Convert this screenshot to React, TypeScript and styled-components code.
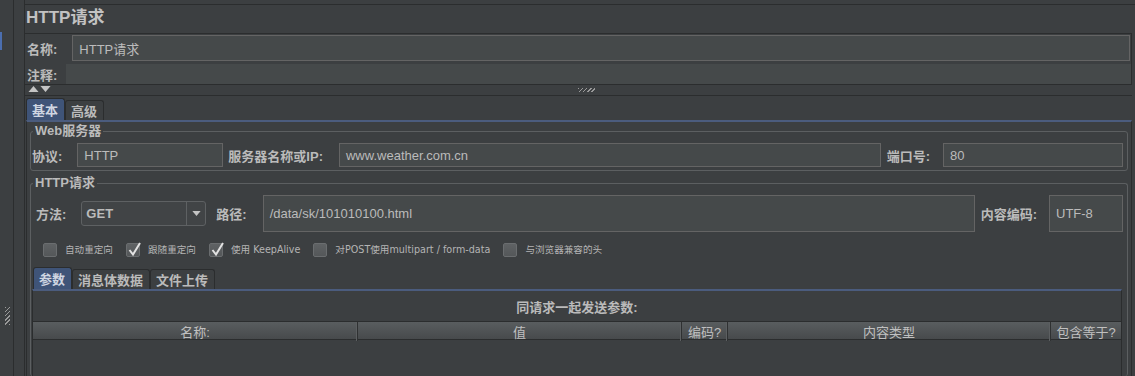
import React from 'react';
import styled, { createGlobalStyle } from 'styled-components';

const GlobalStyle = createGlobalStyle`
  html, body {
    margin: 0;
    padding: 0;
    background: #3c3f41;
  }
  body {
    font-family: "Liberation Sans", "Noto Sans CJK SC", sans-serif;
    font-size: 13px;
    color: #bbbbbb;
  }
  * { box-sizing: border-box; }
`;

const DARK = '#2b2d2e';
const BLUE = '#4b5c7e';

const Screen = styled.div`
  display: flex;
  width: 1135px;
  height: 376px;
  overflow: hidden;
  background: #3c3f41;
`;

// sliver of the tree panel on the left
const TreeEdge = styled.div`
  flex: none;
  width: 14px;
  border-right: 1px solid ${DARK};
  display: flex;
  flex-direction: column;
`;

const TreeMarker = styled.div`
  width: 2px;
  height: 18px;
  margin-top: 32px;
  background: #4b6eaf;
`;

const Grip = styled.div<{ $w: number; $h: number }>`
  flex: none;
  width: ${(p) => p.$w}px;
  height: ${(p) => p.$h}px;
  background: repeating-linear-gradient(
    135deg,
    #9a9a9a 0 1px,
    transparent 1px 3px
  );
`;

const SideGrip = styled(Grip)`
  margin: 257px 0 0 5px;
`;

const MidGrip = styled(Grip)`
  margin-left: 16px;
`;

const SplitGap = styled.div`
  flex: none;
  width: 11px;
  border-right: 1px solid ${DARK};
`;

const Main = styled.div`
  flex: 1;
  min-width: 0;
  padding-top: 4px;
  display: flex;
  flex-direction: column;
`;

const TitleBar = styled.div`
  border-top: 1px solid ${DARK};
  height: 29px;
  padding: 2px 0 0 1px;
  font-size: 17px;
  font-weight: bold;
  line-height: 22px;
  color: #c2c2c2;
`;

const NameBox = styled.div`
  margin-right: 3px;
  border: 1px solid ${DARK};
  border-left: none;
`;

const NameRow = styled.div<{ $top: number }>`
  display: flex;
  align-items: center;
  margin-top: ${(p) => p.$top}px;
  padding-left: 2px;
`;

const Label = styled.span<{ $before?: number; $after?: number }>`
  flex: none;
  font-weight: bold;
  font-size: 13px;
  white-space: nowrap;
  margin-left: ${(p) => p.$before ?? 0}px;
  margin-right: ${(p) => p.$after ?? 0}px;
`;

const Field = styled.div<{ $w?: number; $h: number; $flat?: boolean }>`
  flex: ${(p) => (p.$w ? 'none' : '1')};
  width: ${(p) => (p.$w ? `${p.$w}px` : 'auto')};
  min-width: 0;
  height: ${(p) => p.$h}px;
  display: flex;
  align-items: center;
  padding: 0 6px;
  background: #45494a;
  border: ${(p) => (p.$flat ? 'none' : '1px solid #646464')};
  font-size: 13px;
  color: #bbbbbb;
  white-space: nowrap;
`;

const SplitRow = styled.div`
  height: 11px;
  border-bottom: 1px solid ${DARK};
  display: grid;
  grid-template-columns: 1fr auto 1fr;
  align-items: center;
  margin-right: 3px;
`;

const Arrows = styled.div`
  display: flex;
  gap: 1px;
  padding-left: 3px;
  align-self: start;
  padding-top: 1px;
`;

const TabStrip = styled.div<{ $left: number; $top: number }>`
  display: flex;
  align-items: flex-end;
  margin: ${(p) => p.$top}px 0 0 ${(p) => p.$left}px;
`;

const Tab = styled.div<{ $active?: boolean }>`
  height: ${(p) => (p.$active ? 22 : 20)}px;
  padding: 0 6px 0 5px;
  display: flex;
  align-items: center;
  font-weight: bold;
  font-size: 13px;
  color: ${(p) => (p.$active ? '#cfd6e2' : '#bbbbbb')};
  background: ${(p) => (p.$active ? '#3f5478' : '#3c3f41')};
  border: 1px solid ${DARK};
  border-bottom: none;
  border-radius: 3px 3px 0 0;
`;

const TabBody = styled.div<{ $right: number }>`
  flex: 1;
  display: flex;
  flex-direction: column;
  border-top: 2px solid ${BLUE};
  border-left: 1px solid ${DARK};
  border-right: 1px solid ${DARK};
  margin-right: ${(p) => p.$right}px;
`;

const OuterBody = styled(TabBody)`
  margin-left: 1px;
  padding: 0 3px;
`;

const Group = styled.fieldset`
  margin: 1px 0 0;
  padding: 0 4px 3px 1px;
  min-width: 0;
  border: 1px solid #5c5f61;
  border-radius: 3px;
  & + & {
    margin-top: 4px;
  }
`;

const GrowGroup = styled(Group)`
  flex: 1;
  display: flex;
  flex-direction: column;
  border-bottom: none;
  padding-bottom: 0;
`;

const Legend = styled.legend`
  padding: 0 2px;
  margin-left: 1px;
  font-weight: bold;
  font-size: 13px;
  line-height: 16px;
  color: #bbbbbb;
`;

const FormRow = styled.div<{ $h: number }>`
  display: flex;
  align-items: center;
  height: ${(p) => p.$h}px;
  margin-top: 4px;
`;

const Combo = styled.div`
  flex: none;
  width: 125px;
  height: 25px;
  display: flex;
  border: 1px solid #5e6163;
  border-radius: 3px;
  background: #414446;
`;

const ComboText = styled.div`
  flex: 1;
  display: flex;
  align-items: center;
  padding-left: 4px;
  font-size: 13px;
  font-weight: bold;
  color: #bbbbbb;
`;

const ComboButton = styled.div`
  flex: none;
  width: 19px;
  border-left: 1px solid #5e6163;
  display: flex;
  align-items: center;
  justify-content: center;
`;

const CheckRow = styled.div`
  display: flex;
  align-items: center;
  margin: 10px 0 0 11px;
  height: 15px;
`;

const CheckItem = styled.div`
  display: flex;
  align-items: center;
  margin-right: 13px;
`;

const Box = styled.div`
  position: relative;
  flex: none;
  width: 14px;
  height: 14px;
  border: 1px solid #6a6d6f;
  border-radius: 2px;
  background: linear-gradient(#5f6264, #545759);
`;

const CheckMark = styled.svg`
  position: absolute;
  left: 0;
  top: -3px;
  overflow: visible;
`;

const CheckText = styled.span`
  margin-left: 8px;
  font-family: "DejaVu Sans", "Noto Sans CJK SC", sans-serif;
  font-size: 9.6px;
  line-height: 14px;
  color: #b4b4b4;
  white-space: nowrap;
`;

const ParamsArea = styled.div`
  flex: 1;
  display: flex;
  flex-direction: column;
`;

const Caption = styled.div`
  margin-top: 9px;
  text-align: center;
  font-weight: bold;
  font-size: 13px;
  line-height: 15px;
`;

const TableHead = styled.div`
  margin-top: 6px;
  display: grid;
  grid-template-columns: 325px 324px 46px 323px 1fr;
  height: 19px;
  border-top: 1px solid ${DARK};
  border-bottom: 1px solid ${DARK};
  background: linear-gradient(#595d5f, #474a4c);
`;

const HeadCell = styled.div`
  display: flex;
  align-items: center;
  justify-content: center;
  font-size: 13px;
  color: #c0c0c0;
  white-space: nowrap;
  border-right: 1px solid #2f3132;
  box-shadow: inset -2px 0 0 -1px #5c5f61;
  &:last-child {
    border-right: none;
    box-shadow: none;
  }
`;

const TableBody = styled.div`
  flex: 1;
`;

const Triangle = ({ up, size = 11 }: { up?: boolean; size?: number }) => (
  <svg width={size} height={size * 0.55} viewBox="0 0 10 6">
    <path d={up ? 'M0 6 L5 0 L10 6 Z' : 'M0 0 L10 0 L5 6 Z'} fill="#c4c4c4" />
  </svg>
);

const Check = ({ label, checked }: { label: string; checked?: boolean }) => (
  <CheckItem>
    <Box>
      {checked && (
        <CheckMark width="15" height="16" viewBox="0 0 15 16">
          <path d="M2.5 9 L6 13.5 L13 2" fill="none" stroke="#e2e2e2" strokeWidth="2" />
        </CheckMark>
      )}
    </Box>
    <CheckText>{label}</CheckText>
  </CheckItem>
);

const columns = ['名称:', '值', '编码?', '内容类型', '包含等于?'];

export default function App() {
  return (
    <>
      <GlobalStyle />
      <Screen>
        <TreeEdge>
          <TreeMarker />
          <SideGrip $w={5} $h={18} />
        </TreeEdge>
        <SplitGap />
        <Main>
          <TitleBar>HTTP请求</TitleBar>
          <NameBox>
            <NameRow $top={1}>
              <Label $after={15}>名称:</Label>
              <Field $h={26}>HTTP请求</Field>
              <span style={{ width: 1 }} />
            </NameRow>
            <NameRow $top={3}>
              <Label $after={9}>注释:</Label>
              <Field $h={20} $flat />
            </NameRow>
          </NameBox>
          <SplitRow>
            <Arrows>
              <Triangle up />
              <Triangle />
            </Arrows>
            <MidGrip $w={17} $h={4} />
            <span />
          </SplitRow>

          <TabStrip $left={1} $top={2}>
            <Tab $active>基本</Tab>
            <Tab>高级</Tab>
          </TabStrip>
          <OuterBody $right={3}>
            <Group>
              <Legend>Web服务器</Legend>
              <FormRow $h={24}>
                <Label $after={15}>协议:</Label>
                <Field $w={146} $h={24}>HTTP</Field>
                <Label $before={5} $after={16}>服务器名称或IP:</Label>
                <Field $h={24}>www.weather.com.cn</Field>
                <Label $before={6} $after={13}>端口号:</Label>
                <Field $w={180} $h={24}>80</Field>
              </FormRow>
            </Group>

            <GrowGroup>
              <Legend>HTTP请求</Legend>
              <FormRow $h={37}>
                <Label $before={4} $after={15}>方法:</Label>
                <Combo>
                  <ComboText>GET</ComboText>
                  <ComboButton>
                    <Triangle size={9} />
                  </ComboButton>
                </Combo>
                <Label $before={10} $after={16}>路径:</Label>
                <Field $h={37}>/data/sk/101010100.html</Field>
                <Label $before={6} $after={12}>内容编码:</Label>
                <Field $w={74} $h={37}>UTF-8</Field>
              </FormRow>

              <CheckRow>
                <Check label="自动重定向" />
                <Check label="跟随重定向" checked />
                <Check label="使用 KeepAlive" checked />
                <Check label="对POST使用multipart / form-data" />
                <Check label="与浏览器兼容的头" />
              </CheckRow>

              <TabStrip $left={1} $top={10}>
                <Tab $active>参数</Tab>
                <Tab>消息体数据</Tab>
                <Tab>文件上传</Tab>
              </TabStrip>
              <TabBody $right={1}>
                <ParamsArea>
                  <Caption>同请求一起发送参数:</Caption>
                  <TableHead>
                    {columns.map((c) => (
                      <HeadCell key={c}>{c}</HeadCell>
                    ))}
                  </TableHead>
                  <TableBody />
                </ParamsArea>
              </TabBody>
            </GrowGroup>
          </OuterBody>
        </Main>
      </Screen>
    </>
  );
}
